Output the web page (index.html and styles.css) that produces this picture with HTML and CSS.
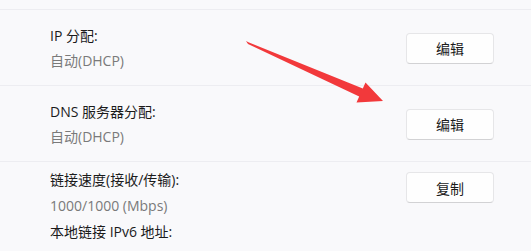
FILE: index.html
```html
<!DOCTYPE html>
<html lang="zh-CN">
<head>
    <meta charset="UTF-8">
    <title>网络属性</title>
    <link rel="stylesheet" href="styles.css">
</head>
<body>
    <div class="panel">
        <div class="row">
            <div class="info">
                <p class="label">IP 分配:</p>
                <p class="value">自动(DHCP)</p>
            </div>
            <button class="btn">编辑</button>
        </div>
        <div class="row">
            <div class="info">
                <p class="label">DNS 服务器分配:</p>
                <p class="value">自动(DHCP)</p>
            </div>
            <button class="btn">编辑</button>
        </div>
        <div class="row row-top">
            <div class="info info-tight">
                <p class="label">链接速度(接收/传输):</p>
                <p class="value">1000/1000 (Mbps)</p>
                <p class="label">本地链接 IPv6 地址:</p>
                <p class="value">fe80::4934:1d1c:7708:a46f%15</p>
            </div>
            <button class="btn">复制</button>
        </div>
    </div>

    <!-- 标注箭头 -->
    <svg class="arrow" width="531" height="251" viewBox="0 0 531 251">
        <polygon points="246,41 249,42.5 362.8,88.4 365.5,82.5 383,101 356.5,102.5 359.2,96.6 248,44" fill="#f2393b"/>
    </svg>
</body>
</html>
```

FILE: styles.css
```css
/* 基本样式 */
body {
    margin: 0;
    background: #f9f9fb;
    font-family: "Open Sans", "Noto Sans CJK SC", sans-serif;
    font-size: 14px;
    color: #1b1b1b;
    overflow: hidden;
    height: 251px;
}

.panel {
    padding-top: 9px;
}

/* 每一行 */
.row {
    display: flex;
    justify-content: space-between;
    align-items: center;
    border-top: 1px solid #ededf1;
    padding: 13px 37px 12px 50px;
    height: 50px;
}

.row-top {
    align-items: flex-start;
    padding-top: 5px;
}

.info p {
    margin: 0;
    line-height: 25px;
}

.info-tight p {
    line-height: 26px;
}

.value {
    color: #7a7a7a;
}

/* 按钮 */
.btn {
    width: 88px;
    height: 31px;
    background: #fefefe;
    border: 1px solid #e6e6e8;
    border-bottom-color: #d2d2d4;
    border-radius: 4px;
    font-family: "Noto Sans CJK SC", sans-serif;
    font-size: 14px;
    color: #1b1b1b;
    padding: 0;
}

.row-top .btn {
    margin-top: 5px;
}

/* 箭头 */
.arrow {
    position: absolute;
    top: 0;
    left: 0;
    pointer-events: none;
}
```
